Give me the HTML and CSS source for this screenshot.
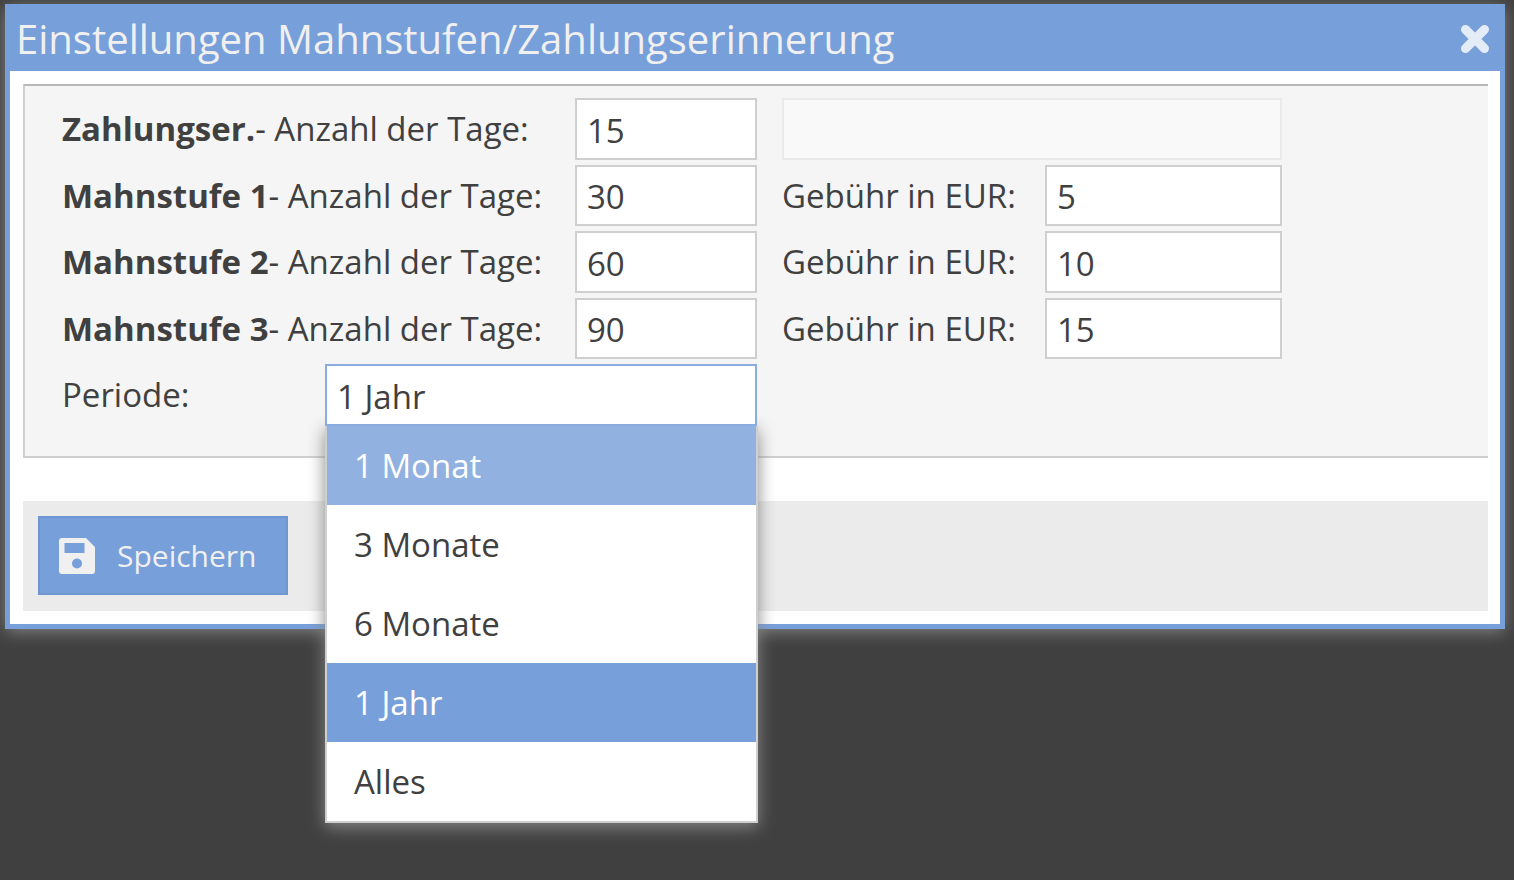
FILE: index.html
```html
<!DOCTYPE html>
<html lang="de">
<head>
<meta charset="utf-8">
<title>Einstellungen Mahnstufen/Zahlungserinnerung</title>
<link rel="stylesheet" href="styles.css">
</head>
<body>
<section class="dialog" role="dialog" aria-labelledby="dialog-title">
  <header class="dialog-header">
    <h1 class="dialog-title" id="dialog-title">Einstellungen Mahnstufen/Zahlungserinnerung</h1>
    <button class="close" type="button" aria-label="Schließen">
      <svg class="close-icon" viewBox="0 0 30 30" aria-hidden="true"><path d="M5.500 5.500 24.500 24.500M24.500 5.500 5.500 24.500" fill="none" stroke="currentColor" stroke-width="9" stroke-linecap="round"/></svg>
    </button>
  </header>
  <form class="dialog-body">
    <div class="fields">
      <label class="label wide" for="tage0"><b>Zahlungser.</b>- Anzahl der Tage:</label>
      <input class="field days" id="tage0" type="text" value="15">
      <input class="field disabled" type="text" aria-label="Gebühr" disabled>

      <label class="label wide" for="tage1"><b>Mahnstufe 1</b>- Anzahl der Tage:</label>
      <input class="field days" id="tage1" type="text" value="30">
      <label class="label fee" for="fee1">Gebühr in EUR:</label>
      <input class="field amount" id="fee1" type="text" value="5">

      <label class="label wide" for="tage2"><b>Mahnstufe 2</b>- Anzahl der Tage:</label>
      <input class="field days" id="tage2" type="text" value="60">
      <label class="label fee" for="fee2">Gebühr in EUR:</label>
      <input class="field amount" id="fee2" type="text" value="10">

      <label class="label wide" for="tage3"><b>Mahnstufe 3</b>- Anzahl der Tage:</label>
      <input class="field days" id="tage3" type="text" value="90">
      <label class="label fee" for="fee3">Gebühr in EUR:</label>
      <input class="field amount" id="fee3" type="text" value="15">

      <label class="label" for="periode">Periode:</label>
      <div class="combo">
        <input class="field active" id="periode" type="text" value="1 Jahr" role="combobox" aria-expanded="true" aria-controls="periode-list">
        <ul class="menu" id="periode-list" role="listbox">
          <li class="option hover" role="option">1 Monat</li>
          <li class="option" role="option">3 Monate</li>
          <li class="option" role="option">6 Monate</li>
          <li class="option selected" role="option" aria-selected="true">1 Jahr</li>
          <li class="option" role="option">Alles</li>
        </ul>
      </div>
    </div>
    <footer class="toolbar">
      <button class="save" type="button">
        <svg class="save-icon" viewBox="0 0 36 36" aria-hidden="true"><path fill="currentColor" fill-rule="evenodd" d="M3 0H27L36 9V33Q36 36 33 36H3Q0 36 0 33V3Q0 0 3 0ZM5.500 5V15H25.500V5ZM18 20.500A5 5 0 1 0 18 30.500A5 5 0 1 0 18 20.500Z"/></svg>
        <span>Speichern</span>
      </button>
    </footer>
  </form>
</section>
</body>
</html>
```
FILE: styles.css
```css
* {
  box-sizing: border-box;
}

body {
  min-height: 100vh;
  margin: 0;
  padding: 4px 9px 0 5px;
  background: #404040;
  color: #404040;
  font-family: "Open Sans", "Noto Sans", sans-serif;
  font-size: 33px;
  line-height: 45px;
}

.dialog {
  border: 5px solid #779fda;
  border-top: 0;
  background: #fff;
  box-shadow: 0 3px 16px -1px #888;
}

.dialog-header {
  display: flex;
  align-items: center;
  justify-content: space-between;
  height: 67px;
  padding: 2px 10px 0 6px;
  background: #779fda;
  color: #f0f0f0;
}

.dialog-title {
  margin: 0;
  font-size: 40px;
  font-weight: 400;
  line-height: 54px;
}

.close {
  display: flex;
  padding: 0;
  border: 0;
  background: none;
  color: #e4ecf8;
}

.close-icon {
  width: 30px;
  height: 30px;
}

.dialog-body {
  padding: 13px 12px 13px 13px;
}

.fields {
  display: grid;
  grid-template-columns: 263px 250px 182px 25px 263px 237px;
  grid-template-rows: 62px 61px 62px 61px 62px;
  row-gap: 5px;
  padding: 12px 0 30px 37px;
  border: 2px solid #cfcfcf;
  border-top-color: #b8b8b8;
  border-right: 0;
  background: #f5f5f5;
}

.label {
  grid-column-start: 1;
  padding-top: 8px;
  white-space: nowrap;
}

.wide {
  grid-column: 1 / 3;
}

.fee {
  grid-column: 5;
}

.field {
  width: 100%;
  height: 100%;
  min-width: 0;
  padding: 2px 10px 0;
  border: 2px solid #cfcfcf;
  border-radius: 0;
  outline: 0;
  background: #fff;
  color: inherit;
  font: inherit;
}

.days {
  grid-column: 3;
}

.amount {
  grid-column: 6;
}

.disabled {
  grid-column: 5 / 7;
  border-color: #eaeaea;
  background: #f9f9f9;
}

.active {
  border-color: #8aacdf;
}

.combo {
  position: relative;
  grid-column: 2 / 4;
}

.menu {
  position: absolute;
  top: 100%;
  left: 0;
  width: calc(100% + 1px);
  margin: 0;
  padding: 0;
  border: 2px solid #cfcfcf;
  border-top: 0;
  background: #fff;
  box-shadow: 0 4px 16px #888;
  list-style: none;
}

.option {
  height: 79px;
  padding: 0 27px;
  line-height: 80px;
}

.active {
  position: relative;
  z-index: 1;
}

.hover {
  background: #91b1e1;
  color: #fff;
}

.selected {
  background: #779fda;
  color: #fff;
}

.toolbar {
  display: flex;
  margin-top: 43px;
  padding: 15px 15px 16px;
  background: #ebebeb;
}

.save {
  display: flex;
  align-items: center;
  gap: 22px;
  height: 79px;
  padding: 0 29px 0 19px;
  border: 2px solid #6f96d0;
  background: #779fda;
  color: #f0f0f0;
  font: inherit;
  font-size: 30px;
}

.save-icon {
  width: 36px;
  height: 36px;
}
```
